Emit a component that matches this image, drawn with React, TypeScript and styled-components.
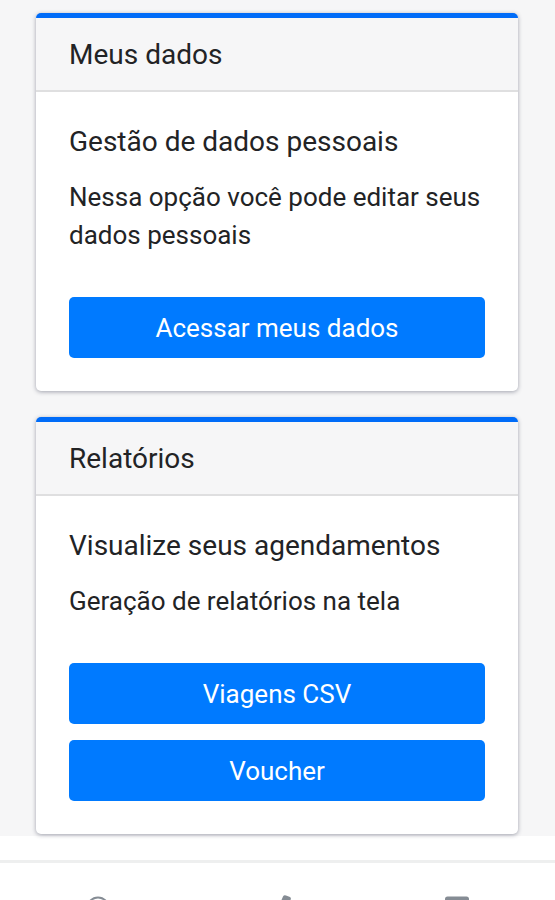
import React from "react";
import styled, { createGlobalStyle } from "styled-components";

const Global = createGlobalStyle`
  *, *::before, *::after { box-sizing: border-box; }
  body {
    margin: 0;
    background: #fff;
    color: #222325;
    font-family: Roboto, "Liberation Sans", sans-serif;
  }
`;

const Shell = styled.div`
  display: flex;
  flex-direction: column;
  height: 100vh;
  overflow: hidden;
`;

const Content = styled.main`
  display: flex;
  flex: none;
  flex-direction: column;
  gap: 26px;
  padding: 13px 37px 2px 36px;
  background: #f6f6f7;
`;

const Card = styled.section`
  background: #fff;
  border-top: 5px solid #006cf8;
  border-radius: 5px;
  box-shadow: 0 1px 4px rgba(40, 45, 70, 0.42);
`;

const CardHeader = styled.header`
  padding: 20px 33px 18px;
  background: #f6f6f7;
  border-bottom: 2px solid #dfdfe0;
`;

const Title = styled.h2`
  margin: 0;
  font-size: 28px;
  line-height: 34px;
  font-weight: 400;
`;

const CardBody = styled.div`
  padding: 32px 33px 33px;
`;

const Subtitle = styled.h3`
  margin: 0 0 18px;
  font-size: 28px;
  line-height: 36px;
  font-weight: 400;
`;

const Text = styled.p`
  margin: 0 0 43px;
  font-size: 26px;
  line-height: 38px;
`;

const Actions = styled.div`
  display: grid;
  gap: 16px;
`;

const Button = styled.button`
  height: 61px;
  padding: 0 16px;
  border: 0;
  border-radius: 5px;
  background: #007aff;
  color: #fff;
  font: 400 26px/38px Roboto, "Liberation Sans", sans-serif;
  cursor: pointer;
`;

const TabBar = styled.nav`
  display: flex;
  flex: none;
  justify-content: space-between;
  margin-top: 24px;
  padding: 33px 86px 16px;
  border-top: 3px solid #eeefef;
`;

const Tab = styled.a`
  display: block;
  color: #858c94;

  svg {
    display: block;
    width: 24px;
    height: 24px;
    overflow: visible;
  }
`;

export default function App() {
  return (
    <Shell>
      <Global />
      <Content>
        <Card>
          <CardHeader>
            <Title>Meus dados</Title>
          </CardHeader>
          <CardBody>
            <Subtitle>Gestão de dados pessoais</Subtitle>
            <Text>Nessa opção você pode editar seus dados pessoais</Text>
            <Actions>
              <Button>Acessar meus dados</Button>
            </Actions>
          </CardBody>
        </Card>
        <Card>
          <CardHeader>
            <Title>Relatórios</Title>
          </CardHeader>
          <CardBody>
            <Subtitle>Visualize seus agendamentos</Subtitle>
            <Text>Geração de relatórios na tela</Text>
            <Actions>
              <Button>Viagens CSV</Button>
              <Button>Voucher</Button>
            </Actions>
          </CardBody>
        </Card>
      </Content>
      <TabBar>
        <Tab href="#" aria-label="Início">
          <svg viewBox="0 0 24 24" fill="none" stroke="currentColor" strokeWidth="2" aria-hidden="true">
            <circle cx="12" cy="12" r="10.5" />
          </svg>
        </Tab>
        <Tab href="#" aria-label="Editar">
          <svg viewBox="0 0 24 24" fill="currentColor" aria-hidden="true">
            <path d="M15.500 4L17 0.500Q18 -1.200 20 -0.500L24 1Q25.500 2 24.500 4L14 22L8 24L8.500 17Z" />
          </svg>
        </Tab>
        <Tab href="#" aria-label="Agenda">
          <svg viewBox="0 0 24 24" fill="currentColor" aria-hidden="true">
            <path fillRule="evenodd" d="M2.500 0.500H21.500Q24 0.500 24 3V21Q24 24 21.500 24H2.500Q0 24 0 21V3Q0 0.500 2.500 0.500ZM3 7V21H21V7Z" />
          </svg>
        </Tab>
      </TabBar>
    </Shell>
  );
}
